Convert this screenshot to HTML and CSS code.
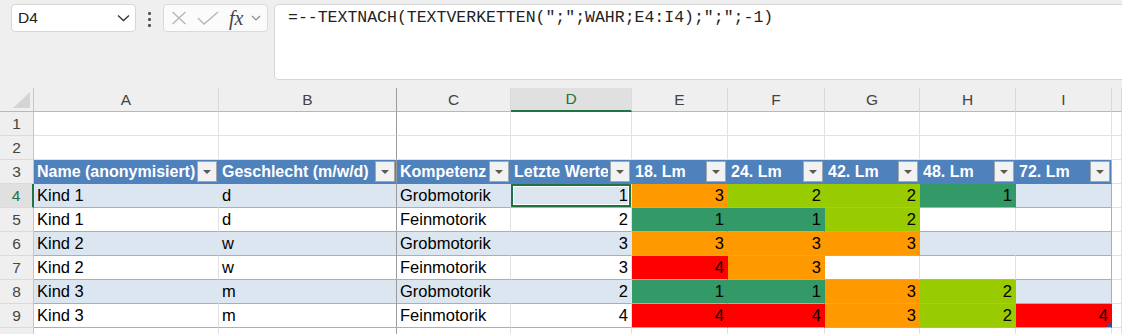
FILE: index.html
```html
<!DOCTYPE html>
<html>
<head>
  <title>Mappe1 - Excel</title>
  <link rel="stylesheet" href="styles.css">
</head>
<body>
  <div class="topbar">
    <div class="namebox">
      <span>D4</span>
      <svg width="13" height="8" viewBox="0 0 13 8"><path d="M1 1.5 L6.5 6.5 L12 1.5" fill="none" stroke="#333" stroke-width="1.3"/></svg>
    </div>
    <div class="dots"><i></i><i></i><i></i></div>
    <div class="fxbox">
      <svg width="16" height="14" viewBox="0 0 16 14"><path d="M1.5 1 L14.5 13 M14.5 1 L1.5 13" stroke="#b5b5b5" stroke-width="1.3" fill="none"/></svg>
      <svg width="22" height="14" viewBox="0 0 22 14"><path d="M1 7 L7 13 L21 1" stroke="#b5b5b5" stroke-width="1.3" fill="none"/></svg>
      <span class="fx">fx</span>
      <svg width="10" height="6" viewBox="0 0 10 6"><path d="M1 1 L5 5 L9 1" fill="none" stroke="#8a8a8a" stroke-width="1.1"/></svg>
    </div>
    <div class="formula">=--TEXTNACH(TEXTVERKETTEN(";";WAHR;E4:I4);";";-1)</div>
  </div>

  <div class="sheet">
    <!-- Spaltenköpfe -->
    <div class="ch corner"><span class="tri"></span></div>
    <div class="ch">A</div>
    <div class="ch sep">B</div>
    <div class="ch">C</div>
    <div class="ch act">D</div>
    <div class="ch">E</div>
    <div class="ch">F</div>
    <div class="ch">G</div>
    <div class="ch">H</div>
    <div class="ch">I</div>
    <div class="ch"></div>

    <!-- Zeile 1 -->
    <div class="rh">1</div>
    <div class="c"></div><div class="c sep"></div><div class="c"></div><div class="c"></div><div class="c"></div>
    <div class="c"></div><div class="c"></div><div class="c"></div><div class="c"></div><div class="c"></div>

    <!-- Zeile 2 -->
    <div class="rh">2</div>
    <div class="c"></div><div class="c sep"></div><div class="c"></div><div class="c"></div><div class="c"></div>
    <div class="c"></div><div class="c"></div><div class="c"></div><div class="c"></div><div class="c"></div>

    <!-- Zeile 3: Tabellenkopf -->
    <div class="rh">3</div>
    <div class="c th"><span>Name (anonymisiert)</span><b class="dd"></b></div>
    <div class="c th sep"><span>Geschlecht (m/w/d)</span><b class="dd"></b></div>
    <div class="c th"><span>Kompetenz</span><b class="dd"></b></div>
    <div class="c th"><span>Letzte Werte</span><b class="dd"></b></div>
    <div class="c th"><span>18. Lm</span><b class="dd"></b></div>
    <div class="c th"><span>24. Lm</span><b class="dd"></b></div>
    <div class="c th"><span>42. Lm</span><b class="dd"></b></div>
    <div class="c th"><span>48. Lm</span><b class="dd"></b></div>
    <div class="c th last"><span>72. Lm</span><b class="dd"></b></div>
    <div class="c"></div>

    <!-- Zeile 4 -->
    <div class="rh act">4</div>
    <div class="c t band">Kind 1</div>
    <div class="c t band sep">d</div>
    <div class="c t band">Grobmotorik</div>
    <div class="c t band n sel">1</div>
    <div class="c t n o">3</div>
    <div class="c t n l">2</div>
    <div class="c t n l">2</div>
    <div class="c t n g">1</div>
    <div class="c t band last"></div>
    <div class="c"></div>

    <!-- Zeile 5 -->
    <div class="rh">5</div>
    <div class="c t">Kind 1</div>
    <div class="c t sep">d</div>
    <div class="c t">Feinmotorik</div>
    <div class="c t n">2</div>
    <div class="c t n g">1</div>
    <div class="c t n g">1</div>
    <div class="c t n l">2</div>
    <div class="c t"></div>
    <div class="c t last"></div>
    <div class="c"></div>

    <!-- Zeile 6 -->
    <div class="rh">6</div>
    <div class="c t band">Kind 2</div>
    <div class="c t band sep">w</div>
    <div class="c t band">Grobmotorik</div>
    <div class="c t band n">3</div>
    <div class="c t n o">3</div>
    <div class="c t n o">3</div>
    <div class="c t n o">3</div>
    <div class="c t band"></div>
    <div class="c t band last"></div>
    <div class="c"></div>

    <!-- Zeile 7 -->
    <div class="rh">7</div>
    <div class="c t">Kind 2</div>
    <div class="c t sep">w</div>
    <div class="c t">Feinmotorik</div>
    <div class="c t n">3</div>
    <div class="c t n r">4</div>
    <div class="c t n o">3</div>
    <div class="c t"></div>
    <div class="c t"></div>
    <div class="c t last"></div>
    <div class="c"></div>

    <!-- Zeile 8 -->
    <div class="rh">8</div>
    <div class="c t band">Kind 3</div>
    <div class="c t band sep">m</div>
    <div class="c t band">Grobmotorik</div>
    <div class="c t band n">2</div>
    <div class="c t n g">1</div>
    <div class="c t n g">1</div>
    <div class="c t n o">3</div>
    <div class="c t n l">2</div>
    <div class="c t band last"></div>
    <div class="c"></div>

    <!-- Zeile 9 -->
    <div class="rh">9</div>
    <div class="c t">Kind 3</div>
    <div class="c t sep">m</div>
    <div class="c t">Feinmotorik</div>
    <div class="c t n">4</div>
    <div class="c t n r">4</div>
    <div class="c t n r">4</div>
    <div class="c t n o">3</div>
    <div class="c t n l">2</div>
    <div class="c t n r last grip">4</div>
    <div class="c"></div>

    <!-- Zeile 10 (nur angeschnitten) -->
    <div class="rh"></div>
    <div class="c"></div><div class="c sep"></div><div class="c"></div><div class="c"></div><div class="c"></div>
    <div class="c"></div><div class="c"></div><div class="c"></div><div class="c"></div><div class="c"></div>
  </div>
</body>
</html>
```

FILE: styles.css
```css
body {
  margin: 0;
  height: 334px;
  overflow: hidden;
  background: #efefef;
  font-family: "Liberation Sans", Arial, sans-serif;
}

/* Namensfeld + Bearbeitungsleiste */
.topbar {
  display: flex;
  align-items: flex-start;
  height: 80px;
  padding: 4px 0 0 11px;
  box-sizing: border-box;
}

.namebox {
  width: 125px;
  height: 28px;
  box-sizing: border-box;
  background: #fff;
  border: 1px solid #d6d6d6;
  border-radius: 4px;
  display: flex;
  align-items: center;
  justify-content: space-between;
  padding: 0 5px 0 6px;
  font-size: 15.5px;
  color: #222;
}

.dots {
  width: 27px;
  display: flex;
  flex-direction: column;
  align-items: center;
  gap: 3px;
  padding-top: 8px;
}

.dots i {
  width: 3px;
  height: 3px;
  background: #555;
  border-radius: 1px;
}

.fxbox {
  width: 105px;
  height: 28px;
  box-sizing: border-box;
  background: #fbfbfb;
  border: 1px solid #dadada;
  border-radius: 4px;
  display: flex;
  align-items: center;
  gap: 10px;
  padding-left: 7px;
}

.fxbox .fx {
  font: italic 20px "Liberation Serif", serif;
  color: #444;
  margin-left: 0;
  margin-right: -2px;
  line-height: 1;
}

.formula {
  flex: 1;
  height: 76px;
  box-sizing: border-box;
  margin: 0 -6px 0 6px;
  background: #fff;
  border: 1px solid #d6d6d6;
  border-radius: 4px 0 0 4px;
  padding: 3px 13px;
  font: 16.5px/20px "Liberation Mono", monospace;
  color: #222;
  white-space: nowrap;
}

/* Tabellenblatt */
.sheet {
  margin-top: 8px;
  display: grid;
  grid-template-columns: 34px 185px 178px 114px 121px 96px 97px 95px 96px 96px 1fr;
  grid-auto-rows: 24px;
}

.sheet > div {
  box-sizing: border-box;
  display: flex;
  align-items: center;
  white-space: nowrap;
  overflow: hidden;
}

.ch {
  justify-content: center;
  background: #efefef;
  border-right: 1px solid #dadada;
  border-bottom: 1px solid #b8b8b8;
  font-size: 15.5px;
  color: #444;
}

.ch.act {
  background: #e0e0e0;
  color: #217346;
  border-bottom: 2px solid #217346;
}

.corner {
  position: relative;
  border-right-color: #c6c6c6;
}

.corner .tri {
  position: absolute;
  right: 3px;
  bottom: 3px;
  width: 0;
  height: 0;
  border-left: 17px solid transparent;
  border-bottom: 16px solid #d4d4d4;
}

.rh {
  justify-content: center;
  background: #efefef;
  border-right: 1px solid #c6c6c6;
  border-bottom: 1px solid #dadada;
  font-size: 15.5px;
  color: #444;
}

.rh.act {
  background: #e0e0e0;
  color: #217346;
  border-right: 2px solid #217346;
}

.c {
  background: #fff;
  border-right: 1px solid #e1e1e1;
  border-bottom: 1px solid #e1e1e1;
  padding: 0 3px;
  font-size: 16.5px;
  color: #000;
}

.c.sep,
.ch.sep {
  border-right-color: #9c9c9c;
}

.c.n {
  justify-content: flex-end;
}

/* Tabellenformat */
.th {
  background: #4f81bd;
  border-right-color: transparent;
  border-bottom-color: #4f81bd;
  color: #fff;
  font-weight: bold;
  font-size: 16px;
  padding-right: 1px;
  gap: 2px;
}

.th span {
  flex: 1;
  min-width: 0;
  overflow: hidden;
}

.dd {
  flex: none;
  position: relative;
  width: 20px;
  height: 21px;
  box-sizing: border-box;
  background: #f2f2f2;
  border: 1px solid #a6a6a6;
}

.dd::after {
  content: "";
  position: absolute;
  left: 5px;
  top: 8px;
  border-left: 4px solid transparent;
  border-right: 4px solid transparent;
  border-top: 4px solid #595959;
}

.c.t {
  border-bottom-color: #95b3d7;
}

.c.band {
  background: #dce6f1;
  border-right-color: transparent;
}

.c.last {
  border-right-color: #95b3d7;
}

.c.o { background: #ff9900; border-right-color: transparent; }
.c.l { background: #99cc00; border-right-color: transparent; }
.c.g { background: #339966; border-right-color: transparent; }
.c.r { background: #ff0000; border-right-color: transparent; }

.c.sep.band {
  border-right-color: #9c9c9c;
}

/* aktive Zelle */
.sheet > .sel {
  box-shadow: inset 0 0 0 2px #217346, inset 0 0 0 3px #fff;
}

.grip {
  position: relative;
}

.grip::after {
  content: "";
  position: absolute;
  right: 0;
  bottom: 0;
  border-left: 5px solid transparent;
  border-bottom: 5px solid #2f5597;
}
```
